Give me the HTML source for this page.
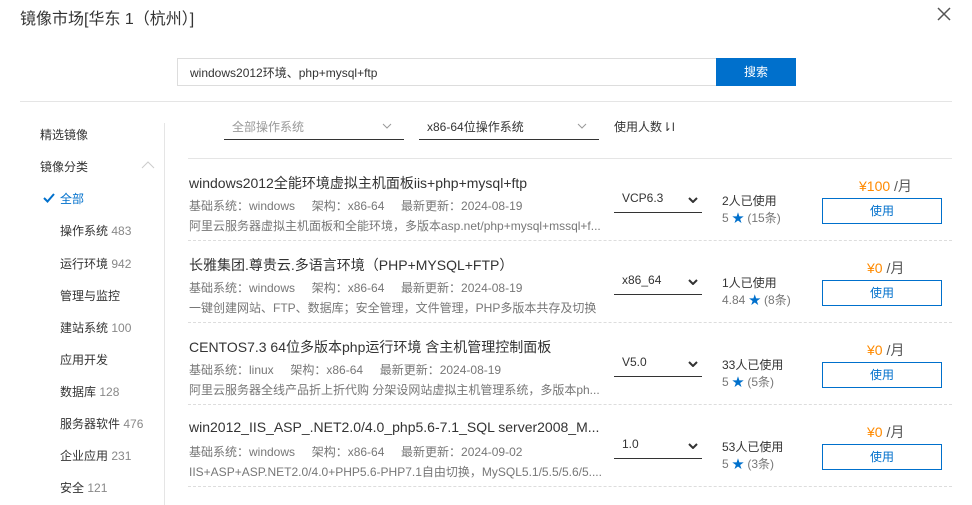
<!DOCTYPE html>
<html><head><meta charset="utf-8"><style>
*{margin:0;padding:0;box-sizing:border-box}
body{width:972px;height:505px;background:#fff;font-family:"Liberation Sans","Noto Sans CJK SC",sans-serif;color:#333;position:relative;overflow:hidden;font-size:12px}
.a{position:absolute;white-space:nowrap}
.t{font-size:14px;color:#333}
.m{font-size:12px;color:#777}
.sel{position:absolute;border-bottom:1px solid #333;height:24px;font-size:12px;color:#333}
.btn{position:absolute;left:822px;width:120px;height:26px;border:1px solid #0070cc;color:#0070cc;text-align:center;line-height:24px;font-size:12px}
.pr{position:absolute;font-size:14px;color:#ff8a00}
.pr span{color:#555}
.dash{position:absolute;left:188px;width:764px;border-top:1px dashed #ddd}
.side{position:absolute;font-size:12px;color:#333}
.side b{font-weight:normal;color:#888}
.star{color:#0070cc}
</style></head><body>
<div class="a" style="left:20px;top:5px;font-size:16px;color:#333">镜像市场[华东 1（杭州）]</div>
<svg class="a" style="left:936px;top:6px" width="16" height="16"><path d="M2 2L14 14M14 2L2 14" stroke="#555" stroke-width="1.5"/></svg>
<div class="a" style="left:177px;top:58px;width:540px;height:28px;border:1px solid #ddd"></div>
<div class="a" style="left:190px;top:64px;font-size:12px;color:#333">windows2012环境、php+mysql+ftp</div>
<div class="a" style="left:716px;top:58px;width:80px;height:28px;background:#0070cc;color:#fff;text-align:center;line-height:28px;font-size:12px">搜索</div>
<div class="a" style="left:20px;top:101px;width:932px;border-top:1px solid #e5e5e5"></div>
<div class="a" style="left:164px;top:123px;height:382px;border-left:1px solid #e5e5e5"></div>
<div class="side" style="left:40px;top:126px">精选镜像</div>
<div class="side" style="left:40px;top:158px">镜像分类</div>
<svg class="a" style="left:141px;top:161px" width="14" height="8"><path d="M1 7L7 1L13 7" stroke="#ccc" fill="none"/></svg>
<svg class="a" style="left:43px;top:193px" width="12" height="10"><path d="M1 5L4.5 8.5L11 1" stroke="#0070cc" stroke-width="2" fill="none"/></svg>
<div class="side" style="left:60px;top:190px;color:#0070cc">全部</div>
<div class="side" style="left:60px;top:222px">操作系统 <b>483</b></div>
<div class="side" style="left:60px;top:255px">运行环境 <b>942</b></div>
<div class="side" style="left:60px;top:287px">管理与监控</div>
<div class="side" style="left:60px;top:319px">建站系统 <b>100</b></div>
<div class="side" style="left:60px;top:351px">应用开发</div>
<div class="side" style="left:60px;top:383px">数据库 <b>128</b></div>
<div class="side" style="left:60px;top:415px">服务器软件 <b>476</b></div>
<div class="side" style="left:60px;top:447px">企业应用 <b>231</b></div>
<div class="side" style="left:60px;top:479px">安全 <b>121</b></div>
<div class="sel" style="left:224px;top:116px;width:180px"><span style="position:absolute;left:8px;top:2px;color:#999">全部操作系统</span><svg style="position:absolute;left:158px;top:7px" width="10" height="6"><path d="M1 1L5 5L9 1" stroke="#999" fill="none"/></svg></div>
<div class="sel" style="left:419px;top:116px;width:180px"><span style="position:absolute;left:8px;top:2px">x86-64位操作系统</span><svg style="position:absolute;left:158px;top:7px" width="10" height="6"><path d="M1 1L5 5L9 1" stroke="#999" fill="none"/></svg></div>
<div class="a" style="left:614px;top:118px;font-size:12px">使用人数⇂l</div>
<div class="a" style="left:188px;top:158px;width:764px;border-top:1px solid #e5e5e5"></div>

<div class="a t" style="left:189px;top:173px">windows2012全能环境虚拟主机面板iis+php+mysql+ftp</div>
<div class="a m" style="left:189px;top:197px">基础系统：windows&nbsp;&nbsp;&nbsp;&nbsp;&nbsp;架构：x86-64&nbsp;&nbsp;&nbsp;&nbsp;&nbsp;最新更新：2024-08-19</div>
<div class="a m" style="left:189px;top:217px">阿里云服务器虚拟主机面板和全能环境，多版本asp.net/php+mysql+mssql+f...</div>
<div class="sel" style="left:614px;top:189px;width:88px"><span style="position:absolute;left:8px;top:2px">VCP6.3</span><svg style="position:absolute;left:74px;top:8px" width="10" height="6"><path d="M1 1L5 5L9 1" stroke="#333" stroke-width="2" fill="none"/></svg></div>
<div class="a" style="left:722px;top:192px;font-size:12px">2人已使用</div>
<div class="a m" style="left:722px;top:209px">5 <span class="star">★</span> (15条)</div>
<div class="pr" style="left:859px;top:176px">¥100 <span>/月</span></div>
<div class="btn" style="top:198px">使用</div>
<div class="dash" style="top:240px"></div>

<div class="a t" style="left:189px;top:255px">长雅集团.尊贵云.多语言环境（PHP+MYSQL+FTP）</div>
<div class="a m" style="left:189px;top:279px">基础系统：windows&nbsp;&nbsp;&nbsp;&nbsp;&nbsp;架构：x86-64&nbsp;&nbsp;&nbsp;&nbsp;&nbsp;最新更新：2024-08-19</div>
<div class="a m" style="left:189px;top:299px">一键创建网站、FTP、数据库；安全管理，文件管理，PHP多版本共存及切换</div>
<div class="sel" style="left:614px;top:271px;width:88px"><span style="position:absolute;left:8px;top:2px">x86_64</span><svg style="position:absolute;left:74px;top:8px" width="10" height="6"><path d="M1 1L5 5L9 1" stroke="#333" stroke-width="2" fill="none"/></svg></div>
<div class="a" style="left:722px;top:274px;font-size:12px">1人已使用</div>
<div class="a m" style="left:722px;top:291px">4.84 <span class="star">★</span> (8条)</div>
<div class="pr" style="left:867px;top:258px">¥0 <span>/月</span></div>
<div class="btn" style="top:280px">使用</div>
<div class="dash" style="top:322px"></div>

<div class="a t" style="left:189px;top:337px">CENTOS7.3 64位多版本php运行环境 含主机管理控制面板</div>
<div class="a m" style="left:189px;top:361px">基础系统：linux&nbsp;&nbsp;&nbsp;&nbsp;&nbsp;架构：x86-64&nbsp;&nbsp;&nbsp;&nbsp;&nbsp;最新更新：2024-08-19</div>
<div class="a m" style="left:189px;top:381px">阿里云服务器全线产品折上折代购 分架设网站虚拟主机管理系统，多版本ph...</div>
<div class="sel" style="left:614px;top:353px;width:88px"><span style="position:absolute;left:8px;top:2px">V5.0</span><svg style="position:absolute;left:74px;top:8px" width="10" height="6"><path d="M1 1L5 5L9 1" stroke="#333" stroke-width="2" fill="none"/></svg></div>
<div class="a" style="left:722px;top:356px;font-size:12px">33人已使用</div>
<div class="a m" style="left:722px;top:373px">5 <span class="star">★</span> (5条)</div>
<div class="pr" style="left:867px;top:340px">¥0 <span>/月</span></div>
<div class="btn" style="top:362px">使用</div>
<div class="dash" style="top:404px"></div>

<div class="a t" style="left:189px;top:419px">win2012_IIS_ASP_.NET2.0/4.0_php5.6-7.1_SQL server2008_M...</div>
<div class="a m" style="left:189px;top:443px">基础系统：windows&nbsp;&nbsp;&nbsp;&nbsp;&nbsp;架构：x86-64&nbsp;&nbsp;&nbsp;&nbsp;&nbsp;最新更新：2024-09-02</div>
<div class="a m" style="left:189px;top:463px">IIS+ASP+ASP.NET2.0/4.0+PHP5.6-PHP7.1自由切换，MySQL5.1/5.5/5.6/5....</div>
<div class="sel" style="left:614px;top:435px;width:88px"><span style="position:absolute;left:8px;top:2px">1.0</span><svg style="position:absolute;left:74px;top:8px" width="10" height="6"><path d="M1 1L5 5L9 1" stroke="#333" stroke-width="2" fill="none"/></svg></div>
<div class="a" style="left:722px;top:438px;font-size:12px">53人已使用</div>
<div class="a m" style="left:722px;top:455px">5 <span class="star">★</span> (3条)</div>
<div class="pr" style="left:867px;top:422px">¥0 <span>/月</span></div>
<div class="btn" style="top:444px">使用</div>
<div class="dash" style="top:486px"></div>
</body></html>
